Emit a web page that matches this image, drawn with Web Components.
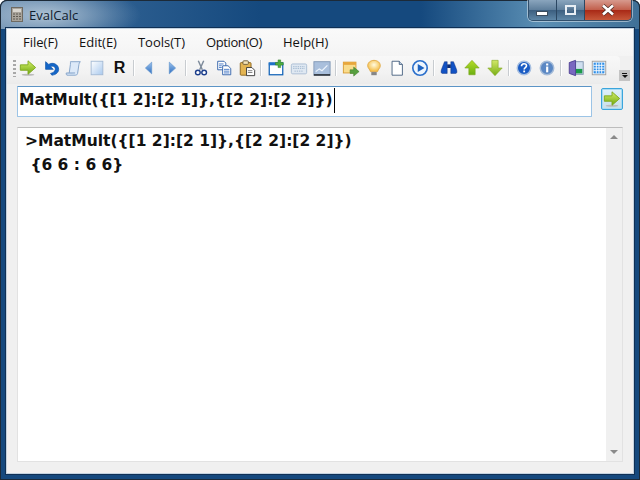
<!DOCTYPE html>
<html>
<head>
<meta charset="utf-8">
<title>EvalCalc</title>
<style>
  html, body { margin: 0; padding: 0; background: #fff; }
  body { width: 640px; height: 480px; overflow: hidden; font-family: "Open Sans", "Liberation Sans", sans-serif; }
</style>
</head>
<body>
<eval-window>
  <title-bar slot="title" label="EvalCalc"></title-bar>
  <menu-bar>
    <menu-item>File(F)</menu-item>
    <menu-item>Edit(E)</menu-item>
    <menu-item>Tools(T)</menu-item>
    <menu-item style="letter-spacing:-.4px">Option(O)</menu-item>
    <menu-item>Help(H)</menu-item>
  </menu-bar>
  <tool-bar>
    <tool-icon name="go"></tool-icon>
    <tool-icon name="undo"></tool-icon>
    <tool-icon name="scroll"></tool-icon>
    <tool-icon name="blank"></tool-icon>
    <tool-icon name="r">R</tool-icon>
    <tool-sep></tool-sep>
    <tool-icon name="left"></tool-icon>
    <tool-icon name="right"></tool-icon>
    <tool-sep></tool-sep>
    <tool-icon name="cut"></tool-icon>
    <tool-icon name="copy"></tool-icon>
    <tool-icon name="paste"></tool-icon>
    <tool-sep></tool-sep>
    <tool-icon name="newwin"></tool-icon>
    <tool-icon name="keyboard"></tool-icon>
    <tool-icon name="chart"></tool-icon>
    <tool-sep></tool-sep>
    <tool-icon name="export"></tool-icon>
    <tool-icon name="bulb"></tool-icon>
    <tool-icon name="page"></tool-icon>
    <tool-icon name="play"></tool-icon>
    <tool-sep></tool-sep>
    <tool-icon name="find"></tool-icon>
    <tool-icon name="up"></tool-icon>
    <tool-icon name="down"></tool-icon>
    <tool-sep></tool-sep>
    <tool-icon name="help"></tool-icon>
    <tool-icon name="info"></tool-icon>
    <tool-sep></tool-sep>
    <tool-icon name="door"></tool-icon>
    <tool-icon name="grid"></tool-icon>
  </tool-bar>
  <input-row value="MatMult({[1 2]:[2 1]},{[2 2]:[2 2]})"></input-row>
  <output-pane>
    <div>&gt;MatMult({[1 2]:[2 1]},{[2 2]:[2 2]})</div>
    <div>&nbsp;{6 6 : 6 6}</div>
  </output-pane>
</eval-window>

<script>
//////////////////////
// helpers
//////////////////////

const define = (name, css, html) => {
  customElements.define(name, class extends HTMLElement {
    constructor() {
      super();
      this.attachShadow({ mode: "open" });
      this.shadowRoot.innerHTML = `<style>${css}</style>${html}`;
    }
  });
};

const greenArrow = `<defs><linearGradient id="ga" x1="0" y1="0" x2="0" y2="1"><stop offset="0" stop-color="#d6f06a"/><stop offset="1" stop-color="#6fa80e"/></linearGradient></defs>
  <ellipse cx="10" cy="17.5" rx="7" ry="1.2" fill="#bbb"/>
  <path d="M1.500 6.500h8.500V2l8.500 7.500-8.500 7.500v-4.500H1.500z" fill="url(#ga)" stroke="#7da81c" stroke-width="1"/>`;

const ICONS = {
  go: greenArrow,
  undo: `<path d="M4 3v8.500h8.500l-3-3c3-1.500 6 .5 5.200 3.500-.6 2.200-2.700 3.500-5.200 4l1.500 2c4.500-.5 7.500-3 7.500-6.500 0-5.500-6.500-8.500-11-5.500z" fill="#1466c8" stroke="#0f55aa" stroke-width=".8"/>`,
  scroll: `<path d="M6 3h11c-1 1-1.500 2-1.500 3L14 16c-.3 1.500-1.500 2-2.500 2H3c1-.5 1.500-1.500 1.700-2.500L6 6c.2-1.500 0-2.500 0-3z" fill="#dce9f8" stroke="#7f9fc6"/><path d="M3 18c-1.500 0-2-1-1.500-2.500h9.700" fill="#c6d8ee" stroke="#7f9fc6"/>`,
  blank: `<defs><linearGradient id="bl" x1="0" y1="0" x2="1" y2="1"><stop offset="0" stop-color="#fff"/><stop offset="1" stop-color="#a9c9ee"/></linearGradient></defs><rect x="3.500" y="2.500" width="13" height="15" fill="url(#bl)" stroke="#a3b9d4"/>`,
  left: `<defs><linearGradient id="lf" x1="0" y1="0" x2="0" y2="1"><stop offset="0" stop-color="#9cc3ee"/><stop offset="1" stop-color="#2f6fc0"/></linearGradient></defs><path d="M13 3.500v13L6 10z" fill="url(#lf)" stroke="#5b8fcb" stroke-width=".7"/>`,
  right: `<defs><linearGradient id="rt" x1="0" y1="0" x2="0" y2="1"><stop offset="0" stop-color="#9cc3ee"/><stop offset="1" stop-color="#2f6fc0"/></linearGradient></defs><path d="M7 3.500v13l7-6.500z" fill="url(#rt)" stroke="#5b8fcb" stroke-width=".7"/>`,
  cut: `<path d="M7 2l4.500 10M13 2L8.500 12" stroke="#7d8a9a" stroke-width="1.600" fill="none"/><circle cx="6.500" cy="15" r="2.600" fill="#fff" stroke="#1d3f8c" stroke-width="1.600"/><circle cx="13.500" cy="15" r="2.600" fill="#fff" stroke="#1d3f8c" stroke-width="1.600"/>`,
  copy: `<path d="M3 2.500h7l2 2V12H3z" fill="#fff" stroke="#2d5ea8"/><path d="M8.500 7.500h6l3 3v7h-9z" fill="#fff" stroke="#2d5ea8"/><path d="M4.500 5.500h5M4.500 7.500h3M4.500 9.500h3M10 11.500h6M10 13.500h6M10 15.500h6" stroke="#3f74c4"/>`,
  paste: `<rect x="2.500" y="4" width="12" height="14" rx="1" fill="#e3b452" stroke="#8a6420"/><rect x="5.500" y="2" width="6" height="4" rx="1" fill="#f4e4b8" stroke="#6b5a38"/><path d="M9.500 9.500h6l3 3v6h-9z" fill="#fff" stroke="#333"/><path d="M11 13h5M11 15h5" stroke="#777"/>`,
  newwin: `<rect x="2.500" y="4.500" width="15" height="13" fill="#fff" stroke="#1464b8" stroke-width="1.400"/><rect x="2" y="4" width="16" height="3" fill="#1f72c8"/><path d="M11 3h3V0h3v3h3v3h-3v3h-3V6h-3z" fill="#4eac3c" stroke="#2f7d24" stroke-width=".6" transform="translate(-1 1) scale(.95)"/>`,
  keyboard: `<rect x="1.500" y="5.500" width="17" height="11" rx="1.500" fill="#dfe8f2" stroke="#a7bbd2"/><path d="M3.500 8.500h13M3.500 10.500h13M5 13.500h10" stroke="#9fb5ce" stroke-dasharray="1.500 1"/>`,
  chart: `<rect x="1" y="3" width="18" height="15" fill="#a9bfdc" stroke="#8097b5"/><rect x="1" y="17" width="18" height="1.400" fill="#111"/><path d="M3 14l4-3 3 2 6-6" fill="none" stroke="#edf4fc" stroke-width="1.300"/>`,
  export: `<rect x="1.500" y="3.500" width="14" height="12" fill="#f9dc8c" stroke="#d89a30"/><rect x="1.500" y="3.500" width="14" height="3" fill="#e8a63c"/><path d="M9 12h4V9l6 5-6 5v-3H9z" fill="#57a040" stroke="#3b7c2b" stroke-width=".6"/>`,
  bulb: `<defs><radialGradient id="bu" cx=".5" cy=".4" r=".6"><stop offset="0" stop-color="#fffbe0"/><stop offset="1" stop-color="#f4b93c"/></radialGradient></defs><path d="M10 1.500c-4 0-7 2.600-7 6 0 2.600 2.500 4 3 6.500h8c.5-2.500 3-3.900 3-6.500 0-3.400-3-6-7-6z" fill="url(#bu)" stroke="#dfa94a"/><rect x="7" y="14.500" width="6" height="3.500" fill="#868686"/>`,
  page: `<path d="M4.500 2.500h8l3.500 3.500v12H4.500z" fill="#fff" stroke="#445d7d"/><path d="M12.500 2.500V6H16" fill="#c7d6e8" stroke="#445d7d"/>`,
  play: `<circle cx="10" cy="10" r="8" fill="#eef5fd" stroke="#2b6fcb" stroke-width="1.800"/><path d="M7.500 5.500v9L15 10z" fill="#1e63c0"/>`,
  find: `<path d="M3 8l2-5h3v13H2.500C1 16 1 14 1.500 12zM17 8l-2-5h-3v13h5.500c1.500 0 1.500-2 1-4z" fill="#1252c4" stroke="#0d2d77" stroke-width=".5"/><rect x="8" y="6" width="4" height="4" fill="#0d2d77"/>`,
  up: `<defs><linearGradient id="ua" x1="0" y1="0" x2="0" y2="1"><stop offset="0" stop-color="#b6dc28"/><stop offset="1" stop-color="#6bb012"/></linearGradient></defs><path d="M10 1.500L18 10h-4.500v7.500h-7V10H2z" fill="url(#ua)" stroke="#7ea61c" stroke-width=".7"/>`,
  down: `<defs><linearGradient id="da" x1="0" y1="0" x2="0" y2="1"><stop offset="0" stop-color="#d2e86a"/><stop offset="1" stop-color="#78ae14"/></linearGradient></defs><path d="M6.500 1.500h7V10H18l-8 8.500L2 10h4.500z" fill="url(#da)" stroke="#86ab2a" stroke-width=".7"/>`,
  help: `<circle cx="10" cy="10" r="7.500" fill="#1a5cc4" stroke="#a7bfe0" stroke-width="1.600"/><path d="M7.200 8c0-3.600 5.600-3.600 5.600-.4 0 2-2.600 2-2.600 4" fill="none" stroke="#fff" stroke-width="1.800"/><rect x="9.200" y="12.800" width="2" height="2" fill="#fff"/>`,
  info: `<circle cx="10" cy="10" r="7.500" fill="#5b88c4" stroke="#a4bbd8" stroke-width="1.600"/><rect x="9" y="5" width="2.400" height="2.200" fill="#fff"/><rect x="9" y="8.400" width="2.400" height="6.400" fill="#fff"/>`,
  door: `<rect x="9" y="3" width="9" height="14" fill="#cfdff0" stroke="#7d93ad"/><rect x="10" y="11" width="7" height="5" fill="#1c9a4a"/><path d="M2.500 4l7-2.500v17l-7-2.500z" fill="#7968c0" stroke="#4d3f92"/>`,
  grid: `<rect x="2.500" y="2.500" width="15" height="15" fill="#fff" stroke="#9b9b9b"/><path d="M4 4h12v12H4z" fill="#2f8fe8"/><path d="M7 4v12M10 4v12M13 4v12M4 7h12M4 10h12M4 13h12" stroke="#fff"/>`,
};

//////////////////////
// components
//////////////////////

define("eval-window", `
  :host { display: flex; flex-direction: column; box-sizing: border-box; width: 640px; height: 480px;
    padding: 0 7px 7px; border-radius: 7px 7px 0 0; position: relative;
    background: #15497e; box-shadow: inset 0 0 0 1px #1c2a38; }
  .client { flex: 1; display: flex; flex-direction: column; min-height: 0; background: #f0f0f0;
    box-shadow: 0 0 0 1px #c3d2e0, 0 0 0 2px #0f3055; }
`, `<slot name="title"></slot><div class="client"><slot></slot></div>`);

define("title-bar", `
  :host { display: flex; height: 29px; margin: 0 -7px; padding: 0 7px 0 11px; box-sizing: border-box;
    border-radius: 7px 7px 0 0; border: 1px solid #1c2a38; border-bottom: 0;
    background:
      radial-gradient(ellipse 95px 30px at 45px 14px, rgba(210,222,232,.72), rgba(210,222,232,.2) 70%, transparent),
      linear-gradient(90deg, #5d83a8 0, #2a5c8e 130px, #15497e 260px, #15497e 420px, #5b8fb4 540px, #3f7097 100%); }
  .icon { width: 12px; height: 15px; margin: 6px 6px 0 -1px; }
  .label { font-size: 13px; line-height: 29px; color: #10202e; flex: 1; }
  .caps { display: flex; height: 20px; margin-top: -1px; border: 1px solid #304f6c; border-top: 0;
    border-radius: 0 0 5px 5px; overflow: hidden; box-shadow: 0 0 0 1px rgba(255,255,255,.45); }
  .cap { display: flex; align-items: center; justify-content: center; width: 28px; box-sizing: border-box;
    background: linear-gradient(#8aa5bd, #5f7f9c 48%, #3c5f80 52%, #5e86a6); border-right: 1px solid #2b4762; }
  .close { width: 46px; border-right: 0; background: linear-gradient(#d79a8e, #c2604d 48%, #a92a17 52%, #c6583a); }
`, `
  <svg class="icon" viewBox="0 0 12 15"><rect x=".5" y=".5" width="11" height="14" fill="#a9a49b" stroke="#6e6a62"/><rect x="2" y="2" width="8" height="3" fill="#d9d6cf"/><path d="M2 7h8M2 9.500h8M2 12h8" stroke="#5e5a52" stroke-dasharray="2 1"/></svg>
  <span class="label"></span>
  <div class="caps">
    <div class="cap"><svg width="13" height="6" viewBox="0 0 13 6" style="margin-top:7px"><rect x=".5" y=".5" width="11" height="4" fill="#fff" stroke="#3a4c5e"/></svg></div>
    <div class="cap"><svg width="11" height="10" viewBox="0 0 11 10"><rect x="1" y="1" width="9" height="8" fill="none" stroke="#e8eef4" stroke-width="2"/><rect x="3" y="3.500" width="5" height="3" fill="#54728f"/></svg></div>
    <div class="cap close"><svg width="16" height="12" viewBox="0 0 16 12"><path d="M3 1.500l10 9M13 1.500l-10 9" stroke="#4b2a24" stroke-width="4"/><path d="M3 1.500l10 9M13 1.500l-10 9" stroke="#fff" stroke-width="2.600"/></svg></div>
  </div>
`);
customElements.whenDefined("title-bar").then(() => {
  document.querySelectorAll("title-bar").forEach((el) => {
    el.shadowRoot.querySelector(".label").textContent = el.getAttribute("label");
  });
});

define("menu-bar", `
  :host { display: flex; gap: 21px; height: 27px; padding: 0 0 0 16px; align-items: center;
    background: linear-gradient(#fafafa, #f4f4f4); box-sizing: border-box; font-size: 13px; color: #111; }
`, `<slot></slot>`);

define("menu-item", `:host { display: block; line-height: 27px; white-space: nowrap; }`, `<slot></slot>`);

define("tool-bar", `
  :host { display: flex; align-items: center; position: relative; height: 28px; box-sizing: border-box;
    padding: 0 0 4px 6px; margin-right: 13px; border-radius: 0 4px 4px 0;
    background: linear-gradient(#f8f8f8, #f2f2f2 60%, #ebebeb); }
  .grip { width: 3px; height: 17px; flex: none;
    background: repeating-linear-gradient(#a8a8a8 0 2px, transparent 2px 4px); }
  .over { position: absolute; right: -10px; top: 14px; width: 11px; height: 11px; background: #c4c4c4;
    display: flex; flex-direction: column; align-items: center; justify-content: center; gap: 1px; }
  .over i { display: block; }
  .over .b { width: 5px; height: 1px; background: #111; }
  .over .t { width: 0; height: 0; border: 3px solid transparent; border-top: 3px solid #111; border-bottom: 0; }
`, `<div class="grip"></div><slot></slot><div class="over"><i class="b"></i><i class="t"></i></div>`);

customElements.define("tool-icon", class extends HTMLElement {
  constructor() {
    super();
    this.attachShadow({ mode: "open" });
    this.shadowRoot.innerHTML = `<style>
      :host { display: flex; flex: none; width: 23px; height: 22px; align-items: center; justify-content: center;
        font: bold 16px "Liberation Sans", sans-serif; color: #111; }
      svg { width: 18px; height: 18px; display: block; }
    </style><slot></slot>`;
  }
  connectedCallback() {
    const art = ICONS[this.getAttribute("name")];
    if (art) {
      this.shadowRoot.innerHTML += `<svg viewBox="0 0 20 20">${art}</svg>`;
    }
  }
});

define("tool-sep", `
  :host { display: block; flex: none; width: 1px; height: 16px; margin: 0 2px 0 2px; background: #c8ccd0; border-right: 1px solid #fff; }
`, ``);

customElements.define("input-row", class extends HTMLElement {
  constructor() {
    super();
    this.attachShadow({ mode: "open" });
    this.shadowRoot.innerHTML = `<style>
      :host { display: flex; gap: 9px; padding: 2px 10px 0; align-items: flex-start; height: 43px; box-sizing: border-box; }
      .field { flex: 1; height: 31px; box-sizing: border-box; background: #fff; border: 1px solid #9cc4e6; border-top-color: #5b94c6; border-radius: 1px;
        display: flex; align-items: flex-start; padding-left: 1px;
        font: bold 15.500px/27px "DejaVu Sans", sans-serif; color: #111; }
      .caret { width: 1px; height: 25px; margin-top: 1px; background: #000; margin-left: 1px; }
      .btn { width: 22px; height: 22px; box-sizing: border-box; margin-top: 2px; border: 1px solid #3ba5dc; border-radius: 2px;
        background: linear-gradient(#dff1fb, #c8dfe8); box-shadow: inset 0 0 0 1px #a9dbf3; display: flex; align-items: center; justify-content: center; }
      svg { width: 18px; height: 18px; }
    </style>
    <div class="field"><span class="text"></span><span class="caret"></span></div>
    <div class="btn"><svg viewBox="0 0 20 20">${greenArrow.replace("ga", "gb").replace("#ga", "#gb")}</svg></div>`;
  }
  connectedCallback() {
    this.shadowRoot.querySelector(".text").textContent = this.getAttribute("value");
  }
});

define("output-pane", `
  :host { flex: 1; min-height: 0; display: flex; margin: 0 10px 11px; background: #fff; border: 1px solid #e2e2e2; border-top-color: #bdbdbd; }
  .text { flex: 1; padding: 1px 0 0 7px; font: bold 15.500px/24px "DejaVu Sans", sans-serif; color: #111; }
  .bar { width: 17px; flex: none; display: flex; flex-direction: column; justify-content: space-between; align-items: center;
    padding: 7px 0; box-sizing: border-box; background: #f0f0f0; border-left: 1px solid #fff; }
  .a { width: 0; height: 0; border: 4px solid transparent; }
  .u { border-bottom-color: #8a8a8a; border-top: 0; }
  .d { border-top-color: #8a8a8a; border-bottom: 0; }
`, `<div class="text"><slot></slot></div><div class="bar"><i class="a u"></i><i class="a d"></i></div>`);
</script>
</body>
</html>
